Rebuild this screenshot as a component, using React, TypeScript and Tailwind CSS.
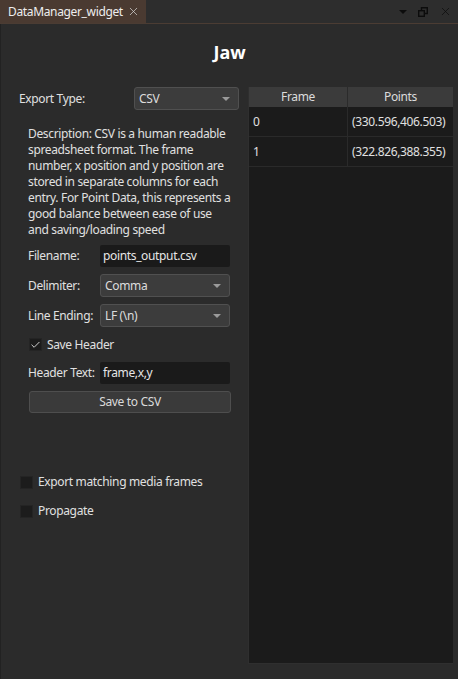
import { Check, X } from "lucide-react";

const FONT = "font-['Segoe_UI','Noto_Sans',sans-serif]";

function Combo({ value, className = "" }: { value: string; className?: string }) {
  return (
    <div
      className={`flex items-center justify-between h-[23px] rounded-[3px] border border-[#505050] bg-[#3c3c3c] pl-[4px] pr-[8px] text-[#dcdcdc] ${className}`}
    >
      <span>{value}</span>
      <span className="w-0 h-0 border-l-[4px] border-r-[4px] border-t-[4px] border-l-transparent border-r-transparent border-t-[#9a9a9a]" />
    </div>
  );
}

function Field({ value }: { value: string }) {
  return (
    <div className="flex items-center h-[22px] w-[130px] rounded-[2px] bg-[#1a1a1a] pl-[3px] text-[#e6e6e6]">
      {value}
    </div>
  );
}

function Box({ checked }: { checked?: boolean }) {
  return (
    <div className="flex items-center justify-center w-[13px] h-[13px] bg-[#1c1c1c] border border-[#242424]">
      {checked && <Check size={12} strokeWidth={2} color="#e0e0e0" />}
    </div>
  );
}

const ROWS = [
  { frame: "0", point: "(330.596,406.503)" },
  { frame: "1", point: "(322.826,388.355)" },
];

const DESC = [
  "Description: CSV is a human readable",
  "spreadsheet format. The frame",
  "number, x position and y position are",
  "stored in separate columns for each",
  "entry. For Point Data, this represents a",
  "good balance between ease of use",
  "and saving/loading speed",
];

export default function App() {
  return (
    <div className={`w-[458px] h-[679px] bg-[#2b2b2b] text-[12px] tracking-[-0.35px] text-[#e0e0e0] flex flex-col ${FONT}`}>
      {/* title bar */}
      <div className="flex h-[24px] bg-[#2d2d2d] border-b border-[#4b3c33]">
        <div className="flex items-center h-[23px] w-[146px] bg-[#4a3a31] pl-[8px] text-[#eeeeee]">
          <span>DataManager_widget</span>
          <X size={13} strokeWidth={1.3} color="#d8d8d8" className="ml-[4px]" />
        </div>
        <div className="flex-1" />
        <div className="flex items-center gap-[11px] pr-[6px]">
          <span className="w-0 h-0 border-l-[4px] border-r-[4px] border-t-[4px] border-l-transparent border-r-transparent border-t-[#0c0c0c]" />
          <svg width="10" height="10" viewBox="0 0 10 10" fill="none" stroke="#0c0c0c" strokeWidth="1.4">
            <rect x="0.7" y="3.7" width="5.6" height="5.6" />
            <path d="M3.5 3.5V0.7H9.3V6.5H6.5" />
          </svg>
          <X size={13} strokeWidth={1.3} color="#0c0c0c" />
        </div>
      </div>

      <div className="flex-1 flex flex-col border-l border-[#222]">
        <div className="text-center font-bold text-[18px] tracking-normal text-white pt-[15px] h-[63px]">Jaw</div>

        <div className="flex flex-1 pb-[15px]">
          {/* left column */}
          <div className="w-[247px] flex flex-col">
            <div className="flex items-center pl-[18px]">
              <span className="w-[115px]">Export Type:</span>
              <Combo value="CSV" className="w-[105px]" />
            </div>

            <div className="flex flex-col pl-[27px] pr-[4px]">
              <p className="mt-[16px] leading-[16px] whitespace-nowrap">
                {DESC.map((l) => (
                  <span key={l} className="block">
                    {l}
                  </span>
                ))}
              </p>

              <div className="flex flex-col gap-[7px] mt-[7px]">
                <div className="flex items-center">
                  <span className="w-[72px]">Filename:</span>
                  <Field value="points_output.csv" />
                </div>
                <div className="flex items-center">
                  <span className="w-[72px]">Delimiter:</span>
                  <Combo value="Comma" className="w-[130px]" />
                </div>
                <div className="flex items-center">
                  <span className="w-[72px]">Line Ending:</span>
                  <Combo value="LF (\n)" className="w-[130px]" />
                </div>
                <div className="flex items-center gap-[5px] pl-[1px] h-[21px]">
                  <Box checked />
                  <span>Save Header</span>
                </div>
                <div className="flex items-center">
                  <span className="w-[72px]">Header Text:</span>
                  <Field value="frame,x,y" />
                </div>
                <div className="flex items-center justify-center h-[22px] w-[202px] ml-[1px] rounded-[3px] border border-[#4e4e4e] bg-[#3a3a3a] text-[#dadada]">
                  Save to CSV
                </div>
              </div>
            </div>

            <div className="flex flex-col gap-[11px] pl-[19px] mt-[60px]">
              <div className="flex items-center gap-[5px]">
                <Box />
                <span>Export matching media frames</span>
              </div>
              <div className="flex items-center gap-[5px]">
                <Box />
                <span>Propagate</span>
              </div>
            </div>
          </div>

          {/* table */}
          <div className="w-[205px] bg-[#1b1b1b] border-l border-b border-[#2f2f2f] flex flex-col">
            <div className="flex h-[20px] bg-[#3b3b3b] text-[#dcdcdc]">
              <div className="w-[99px] flex items-center justify-center border-r border-[#2b2b2b]">Frame</div>
              <div className="flex-1 flex items-center justify-center">Points</div>
            </div>
            {ROWS.map((r) => (
              <div key={r.frame} className="flex h-[30px] border-b border-[#2a2a2a]">
                <div className="w-[99px] flex items-center pl-[4px] border-r border-[#2a2a2a]">{r.frame}</div>
                <div className="flex-1 flex items-center pl-[4px]">{r.point}</div>
              </div>
            ))}
          </div>
        </div>
      </div>
    </div>
  );
}
